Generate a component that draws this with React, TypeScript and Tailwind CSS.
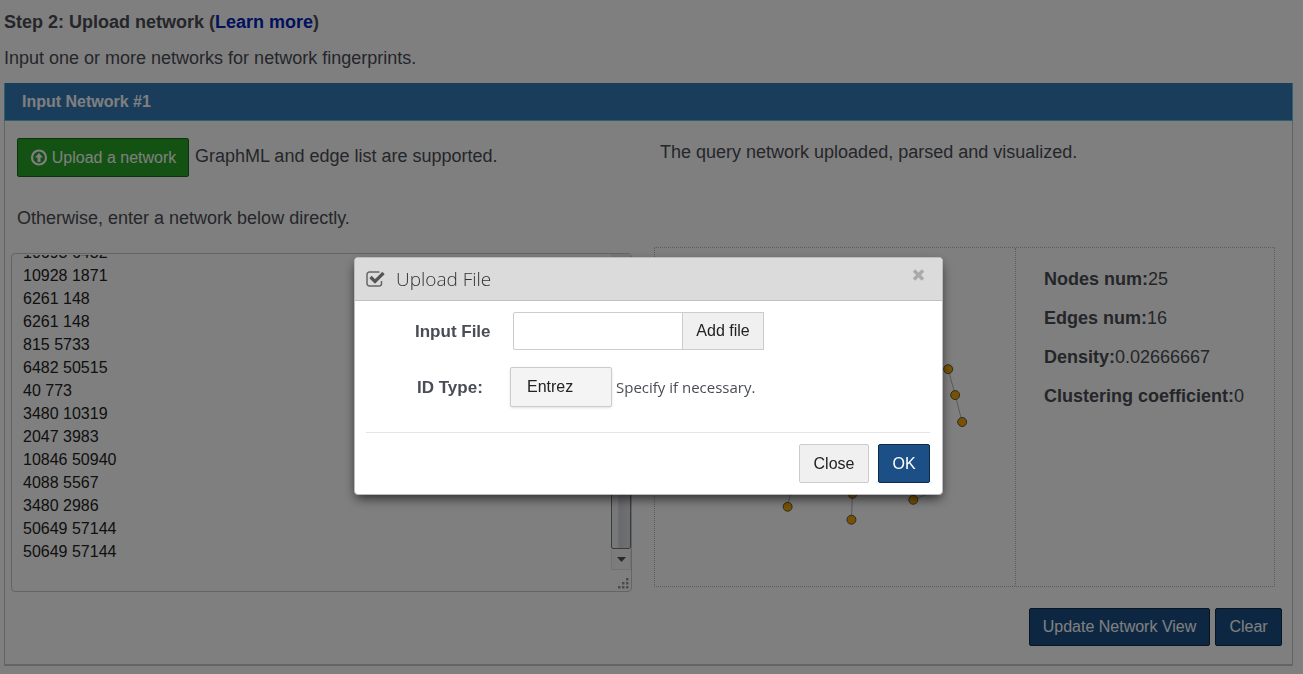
import { useLayoutEffect, useRef } from "react";

const EDGE_LIST = [
  "10693 6432",
  "10928 1871",
  "6261 148",
  "6261 148",
  "815 5733",
  "6482 50515",
  "40 773",
  "3480 10319",
  "2047 3983",
  "10846 50940",
  "4088 5567",
  "3480 2986",
  "50649 57144",
  "50649 57144",
].join("\n");

const NODES = [
  [294, 121],
  [301, 147],
  [308, 174],
  [133, 259],
  [198, 246],
  [197, 272],
  [259, 252],
];

const EDGES = [
  [294, 121, 301, 147],
  [301, 147, 308, 174],
  [133, 259, 138, 236],
  [198, 246, 197, 272],
  [259, 252, 285, 242],
];

const STATS = [
  ["Nodes num:", "25"],
  ["Edges num:", "16"],
  ["Density:", "0.02666667"],
  ["Clustering coefficient:", "0"],
];

function EdgeListBox() {
  const ref = useRef<HTMLTextAreaElement>(null);
  useLayoutEffect(() => {
    if (ref.current) ref.current.scrollTop = ref.current.scrollHeight;
  }, []);
  return (
    <div className="mt-[23px] flex h-[339px] rounded-sm border border-[#c8c8c8]">
      <textarea
        ref={ref}
        aria-label="Network edge list"
        defaultValue={EDGE_LIST}
        className="mt-px ml-[11px] block h-[308px] flex-1 resize-none overflow-hidden text-base leading-[23px] text-[#222] outline-none"
      />
      <div aria-hidden="true" className="flex w-5 flex-col items-stretch">
        <div className="h-5 bg-[#f0f0f0]" />
        <div className="h-[275px] rounded-xs border border-[#777] bg-linear-to-r from-[#f0f0f0] from-30% via-[#d2d4d9] via-40% to-[#dfe1e5]" />
        <div className="flex h-[21px] items-center justify-center border border-t-0 border-[#e4e4e4] bg-[#f8f8f8]">
          <svg width="9" height="5" viewBox="0 0 9 5"><path d="M0 0h9L4.500 5z" fill="#555" /></svg>
        </div>
        <svg className="mt-auto mr-0.5 mb-0.5 self-end" width="12" height="12" viewBox="0 0 12 12" fill="#999">
          <path d="M9 1h2.500v2.500H9zM9 5h2.500v2.500H9zM9 9h2.500v2.500H9zM5 5h2.500v2.500H5zM5 9h2.500v2.500H5zM1 9h2.500v2.500H1z" />
        </svg>
      </div>
    </div>
  );
}

function NetworkView() {
  return (
    <div className="mt-[83px] flex h-[340px] border border-dotted border-[#bbb]">
      <div className="flex-1">
        <svg viewBox="0 0 361 338" className="h-full w-full" role="img" aria-label="Network graph">
          {EDGES.map(([x1, y1, x2, y2], i) => (
            <line key={i} x1={x1} y1={y1} x2={x2} y2={y2} stroke="#b4b4b4" />
          ))}
          {NODES.map(([cx, cy], i) => (
            <circle key={i} cx={cx} cy={cy} r="4.500" fill="#f0a400" stroke="#555" />
          ))}
        </svg>
      </div>
      <dl className="w-[259px] border-l border-dotted border-[#bbb] pt-3 pl-7 text-lg leading-[39px] text-[#4a4d55]">
        {STATS.map(([label, value]) => (
          <div key={label} className="flex">
            <dt className="font-bold">{label}</dt>
            <dd>{value}</dd>
          </div>
        ))}
      </dl>
    </div>
  );
}

function UploadDialog() {
  return (
    <div className="fixed inset-0 flex items-start justify-center bg-black/50 pt-[257px] pr-1.5">
      <div
        role="dialog"
        aria-modal="true"
        aria-labelledby="dialog-title"
        className="w-full max-w-[589px] overflow-hidden rounded-sm border border-[#bbb] bg-white shadow-[0_5px_12px_-2px_rgba(0,0,0,0.7)]"
      >
        <header className="flex h-[43px] items-center border-b border-[#c0c0c0] bg-[#dbdbdb] px-[11px]">
          <svg width="20" height="18" viewBox="0 0 20 18" fill="none" aria-hidden="true">
            <path d="M13.500 2H3.500A2.500 2.500 0 0 0 1 4.500v9A2.500 2.500 0 0 0 3.500 16h9.500a2.500 2.500 0 0 0 2.500-2.500V11" stroke="#666" strokeWidth="1.500" />
            <path d="M4.500 7L9 11.500L17.500 3" stroke="#555" strokeWidth="3.200" />
          </svg>
          <h2 id="dialog-title" className="ml-2.5 flex-1 font-['Open_Sans',sans-serif] text-[19px] font-light text-[#333]">
            Upload File
          </h2>
          <button type="button" aria-label="Close dialog" className="mr-1 mb-2 p-0.5">
            <svg width="13" height="12" viewBox="0 0 13 12">
              <path d="M2 1.500l9 9M11 1.500l-9 9" stroke="#aaa" strokeWidth="3.400" />
            </svg>
          </button>
        </header>
        <div className="px-3 pb-[11px] pl-[11px]">
          <div className="flex items-center pt-[11px]">
            <label htmlFor="input-file" className="w-[147px] pt-0.5 pl-[49px] text-[17px] font-bold text-[#4a4d55]">
              Input File
            </label>
            <input
              id="input-file"
              type="text"
              className="h-[38px] w-[170px] rounded-l-xs border border-[#ccc] px-2 outline-none"
            />
            <button type="button" className="-ml-px h-[38px] w-[82px] border border-[#ccc] bg-[#f0f0f0] text-base text-[#222]">
              Add file
            </button>
          </div>
          <div className="flex items-center pt-[17px]">
            <label htmlFor="id-type" className="w-36 pt-0.5 pl-[51px] text-[17px] font-bold text-[#4a4d55]">
              ID Type:
            </label>
            <select
              id="id-type"
              className="h-10 w-[102px] appearance-none rounded-xs border border-[#ccc] bg-[#f4f4f4] px-4 text-base text-[#222] shadow-sm"
            >
              <option>Entrez</option>
            </select>
            <span className="ml-1 font-['Open_Sans',sans-serif] text-[15px] text-[#4a4d55]">Specify if necessary.</span>
          </div>
          <div className="mt-[25px] flex justify-end gap-[9px] border-t border-[#e5e5e5] pt-[11px]">
            <button type="button" className="h-[39px] w-[70px] rounded-xs border border-[#ccc] bg-[#f0f0f0] text-base text-[#222]">
              Close
            </button>
            <button type="button" className="h-[39px] w-[52px] rounded-xs border border-[#0f2b47] bg-[#1b4f85] text-base text-white">
              OK
            </button>
          </div>
        </div>
      </div>
    </div>
  );
}

export default function App() {
  return (
    <div className="min-h-screen bg-white font-['Liberation_Sans',Arial,sans-serif] text-lg leading-6 text-[#4a4d55]">
      <main className="pt-2.5 pr-2.5 pb-2 pl-1">
        <h1 className="text-lg leading-6 font-bold">
          Step 2: Upload network (
          <a href="#learn-more" className="text-[#0022bb]">Learn more</a>)
        </h1>
        <p className="mt-3">Input one or more networks for network fingerprints.</p>
        <section className="mt-[13px] border border-t-0 border-b-2 border-[#c8c8c8]">
          <h2 className="-mx-px flex h-[38px] items-center border-r border-b border-l border-[#5bc0de] bg-[#337ab7] px-[17px] text-base font-bold text-white">
            Input Network #1
          </h2>
          <div className="grid grid-cols-2 gap-[22px] pt-[17px] pr-[17px] pl-1.5">
            <div>
              <div className="flex items-center px-1.5">
                <button
                  type="button"
                  className="flex h-[39px] w-[172px] items-center justify-center gap-1 rounded-xs border border-[#186818] bg-[#26a426] text-base text-white"
                >
                  <svg width="18" height="18" viewBox="0 0 18 18" aria-hidden="true">
                    <circle cx="9" cy="8.500" r="7" fill="none" stroke="#fff" strokeWidth="2.200" />
                    <path d="M9 4l4 4.500h-2.500V13h-3V8.500H5z" fill="#fff" />
                  </svg>
                  Upload a network
                </button>
                <span className="ml-1.5 pb-1">GraphML and edge list are supported.</span>
              </div>
              <p className="mt-[29px] px-1.5">Otherwise, enter a network below directly.</p>
              <EdgeListBox />
            </div>
            <div>
              <p className="px-1.5 pt-0.5">The query network uploaded, parsed and visualized.</p>
              <NetworkView />
            </div>
          </div>
          <div className="flex justify-end gap-[5px] pt-4 pr-2.5 pb-[18px]">
            <button type="button" className="h-[38px] w-[181px] rounded-xs border border-[#0f2b47] bg-[#1b4f85] text-base text-white">
              Update Network View
            </button>
            <button type="button" className="h-[38px] w-[67px] rounded-xs border border-[#0f2b47] bg-[#1b4f85] text-base text-white">
              Clear
            </button>
          </div>
        </section>
      </main>
      <UploadDialog />
    </div>
  );
}
